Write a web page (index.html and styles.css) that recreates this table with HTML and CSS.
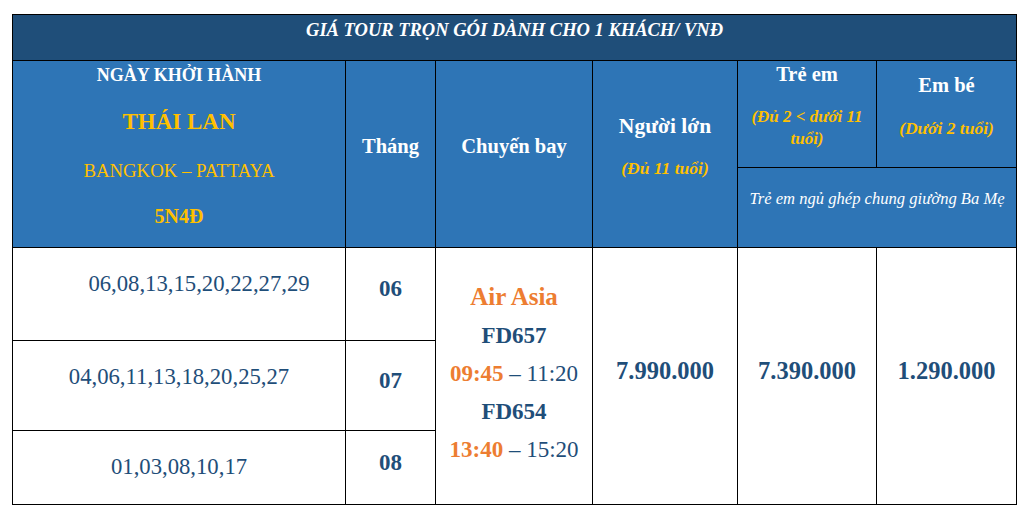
FILE: index.html
```html
<!DOCTYPE html>
<html lang="vi">
<head>
<meta charset="utf-8">
<title>Giá tour Thái Lan</title>
<link rel="stylesheet" href="styles.css">
</head>
<body>
<table class="tour">
  <colgroup>
    <col class="c-date"><col class="c-month"><col class="c-flight"><col class="c-adult"><col class="c-child"><col class="c-baby">
  </colgroup>
  <tr class="r-title">
    <td colspan="6" class="title">GIÁ TOUR TRỌN GÓI DÀNH CHO 1 KHÁCH/ VNĐ</td>
  </tr>
  <tr class="r-head1">
    <td rowspan="2" class="head h-date">
      <div class="l1">NGÀY KHỞI HÀNH</div>
      <div class="l2">THÁI LAN</div>
      <div class="l3">BANGKOK – PATTAYA</div>
      <div class="l4">5N4Đ</div>
    </td>
    <td rowspan="2" class="head h-mid">Tháng</td>
    <td rowspan="2" class="head h-mid">Chuyến bay</td>
    <td rowspan="2" class="head h-adult">
      <div class="big">Người lớn</div>
      <div class="sub">(Đủ 11 tuổi)</div>
    </td>
    <td class="head h-child">
      <div class="big">Trẻ em</div>
      <div class="sub sub-child">(Đủ 2 &lt; dưới 11<br>tuổi)</div>
    </td>
    <td class="head h-baby">
      <div class="big">Em bé</div>
      <div class="sub">(Dưới 2 tuổi)</div>
    </td>
  </tr>
  <tr class="r-head2">
    <td colspan="2" class="head h-note">Trẻ em ngủ ghép chung giường Ba Mẹ</td>
  </tr>
  <tr class="r-b1">
    <td class="dates dates-first">06,08,13,15,20,22,27,29</td>
    <td class="month">06</td>
    <td rowspan="3" class="flight">
      <div class="air">Air Asia</div>
      <div class="code">FD657</div>
      <div class="time"><b class="dep">09:45</b> – 11:20</div>
      <div class="code">FD654</div>
      <div class="time"><b class="dep">13:40</b> – 15:20</div>
    </td>
    <td rowspan="3" class="price">7.990.000</td>
    <td rowspan="3" class="price">7.390.000</td>
    <td rowspan="3" class="price">1.290.000</td>
  </tr>
  <tr class="r-b2">
    <td class="dates">04,06,11,13,18,20,25,27</td>
    <td class="month">07</td>
  </tr>
  <tr class="r-b3">
    <td class="dates">01,03,08,10,17</td>
    <td class="month">08</td>
  </tr>
</table>
</body>
</html>
```

FILE: styles.css
```css
html, body {
  margin: 0;
  padding: 0;
  background: #ffffff;
}
body {
  padding: 14px 0 0 12px;
  font-family: "Liberation Serif", "Times New Roman", serif;
}
.tour {
  border-collapse: collapse;
  table-layout: fixed;
  width: 1004px;
  border: 1px solid #000;
}
.tour td {
  border: 1px solid #000;
  padding: 0;
  text-align: center;
}
.c-date { width: 333px; }
.c-month { width: 90px; }
.c-flight { width: 157px; }
.c-adult { width: 145px; }
.c-child { width: 139px; }
.c-baby { width: 140px; }

.r-title { height: 46px; }
.r-head1 { height: 107px; }
.r-head2 { height: 80px; }
.r-b1 { height: 93px; }
.r-b2 { height: 90px; }
.r-b3 { height: 74px; }

.title {
  background: #1f4e79;
  color: #ffffff;
  font-weight: bold;
  font-style: italic;
  font-size: 18.5px;
  line-height: 30px;
  vertical-align: top;
}
.head {
  background: #2e75b6;
  color: #ffffff;
  font-weight: bold;
  font-size: 20.5px;
}
.h-date { vertical-align: top; }
.h-date .l1 { line-height: 28px; font-size: 18px; }
.h-date .l2 { line-height: 66px; font-size: 23px; color: #ffc000; }
.h-date .l3 { line-height: 32px; font-size: 18.8px; font-weight: normal; color: #ffc000; }
.h-date .l4 { line-height: 58px; font-size: 20px; color: #ffc000; }

.h-mid {
  vertical-align: middle;
  padding-bottom: 16px !important;
}
.h-adult {
  vertical-align: middle;
  padding-bottom: 14px !important;
}
.h-adult .big { font-size: 21.5px; }
.h-adult .big, .h-adult .sub { line-height: 42px; }

.sub {
  color: #ffc000;
  font-style: italic;
  font-size: 17.5px;
}
.h-child { vertical-align: top; }
.h-child .big { line-height: 26px; margin-bottom: 19px; }
.h-child .sub { line-height: 22px; font-size: 17px; }
.h-baby { vertical-align: top; padding-top: 3px !important; }
.h-baby .big, .h-baby .sub { line-height: 43px; }

.h-note {
  font-weight: normal;
  font-style: italic;
  font-size: 16.6px;
  vertical-align: middle;
  padding-bottom: 18px !important;
}

.dates {
  color: #1f4e79;
  font-size: 22.7px;
  line-height: 30px;
  vertical-align: top;
  padding-top: 21px !important;
}
.dates-first { padding-left: 40px !important; }
.month {
  color: #1f4e79;
  font-weight: bold;
  font-size: 23px;
  vertical-align: middle;
  padding-bottom: 10px !important;
}
.flight {
  color: #1f4e79;
  font-size: 23px;
  line-height: 38px;
  vertical-align: middle;
  padding-bottom: 8px !important;
}
.flight .air {
  color: #ed7d31;
  font-weight: bold;
  font-size: 25px;
  line-height: 41px;
}
.flight .code { font-weight: bold; }
.flight .dep { color: #ed7d31; }
.price {
  color: #1f4e79;
  font-weight: bold;
  font-size: 24.5px;
  vertical-align: middle;
  padding-bottom: 10px !important;
}
```
